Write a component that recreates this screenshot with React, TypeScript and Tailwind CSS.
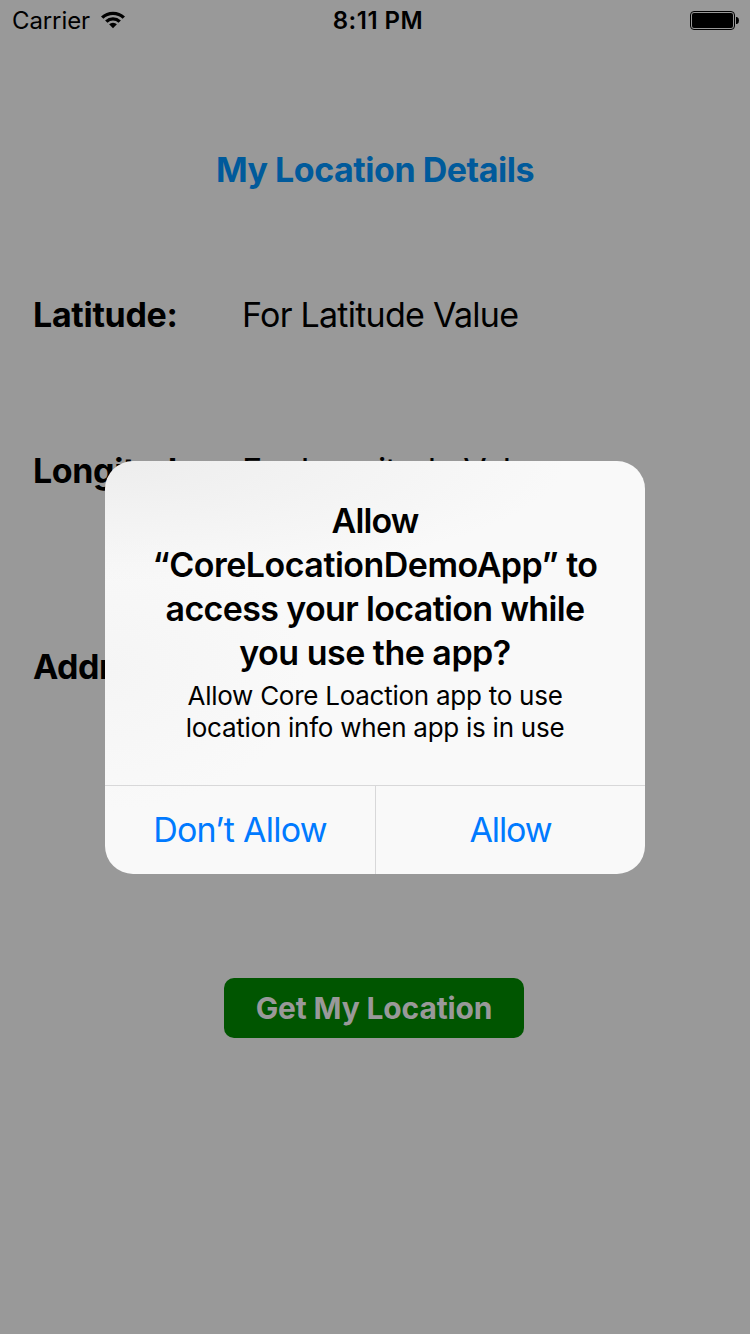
export default function App() {
  return (
    <div className="relative flex h-[1334px] w-[750px] flex-col overflow-hidden bg-[#999999] font-['Inter','Liberation_Sans',sans-serif] text-black">
      <header className="flex h-10 shrink-0 items-center justify-between pl-3 pr-[11px] pt-[2px] text-[24px]">
        <div className="flex w-[200px] items-center gap-[10px]">
          <span className="whitespace-nowrap leading-10 tracking-[-0.1px]">Carrier</span>
          <svg className="mb-[3px]" width="26" height="18" viewBox="0 0 26 18">
            <path d="M1 5.400a17.600 17.600 0 0 1 24 0l-2.400 2.300a14.200 14.200 0 0 0-19.200 0z" />
            <path d="M5.100 9.400a11.600 11.600 0 0 1 15.800 0l-2.400 2.300a8.200 8.200 0 0 0-11 0z" />
            <path d="M9.100 13.200a5.700 5.700 0 0 1 7.800 0l-3.900 4.100z" />
          </svg>
        </div>
        <span className="ml-[5px] whitespace-nowrap font-semibold leading-10 tracking-[0.5px]">8:11 PM</span>
        <div className="flex w-[200px] justify-end">
          <svg width="49" height="20" viewBox="0 0 49 20">
            <rect x=".5" y=".5" width="44" height="18" rx="3.5" fill="none" stroke="black" />
            <rect x="2" y="2" width="41" height="15" rx="2" fill="black" />
            <path d="M46 6h1q2 .6 2 3.500t-2 3.500h-1z" fill="black" />
          </svg>
        </div>
      </header>
      <main className="flex flex-col">
        <h1 className="mt-[106px] text-center text-[34px] font-bold leading-[48px] tracking-[-0.48px] text-[#005a9b]"><span>My Location Details</span></h1>
        <div className="mt-[97px] flex pl-[33px] text-[34px] leading-[48px]">
          <b className="w-[209px] tracking-[-0.3px]"><span>Latitude:</span></b><span className="tracking-[-0.74px]">For Latitude Value</span>
        </div>
        <div className="mt-[108px] flex pl-[33px] text-[34px] leading-[48px]">
          <b className="w-[209px] tracking-[-0.4px]"><span>Longitude:</span></b><span className="tracking-[-0.74px]">For Longitude Value</span>
        </div>
        <div className="mt-[148px] flex pl-[33px] text-[34px] leading-[48px] tracking-[-0.5px]">
          <b><span>Address:</span></b>
        </div>
        <button className="ml-[224px] mt-[287px] h-[60px] w-[300px] rounded-[10px] bg-[#005500] text-[30px] font-bold tracking-[-0.15px] text-[#999999]"><span>Get My Location</span></button>
      </main>
      <section role="dialog" className="absolute left-[105px] top-[461px] flex h-[413px] w-[540px] flex-col overflow-hidden rounded-[28px] bg-[#f9f9f9] bg-[radial-gradient(ellipse_460px_120px_at_0_0,#ededed,#f9f9f900),radial-gradient(ellipse_200px_140px_at_0_210px,#f5f5f5,#f9f9f900)] text-center">
        <div className="flex h-[324px] flex-col items-center pt-[38px]">
          <h2 className="whitespace-nowrap text-[34px] font-semibold leading-[44px] tracking-[-0.5px]">
            <span className="tracking-[-0.9px]">Allow</span><br /><span>“CoreLocationDemoApp” to</span><br /><span className="tracking-[-0.64px]">access your location while</span><br /><span>you use the app?</span>
          </h2>
          <p className="mt-[5px] whitespace-nowrap text-[26px] leading-8 tracking-[-0.26px]"><span>Allow Core Loaction app to use</span><br /><span>location info when app is in use</span></p>
        </div>
        <div className="flex h-[89px] border-t border-[#d8d8d9] text-[34px] text-[#007aff]">
          <button className="w-[271px] border-r border-[#d8d8d9] pb-px tracking-[-0.75px]"><span>Don’t Allow</span></button>
          <button className="w-[269px] pb-px tracking-[-1.1px]"><span>Allow</span></button>
        </div>
      </section>
    </div>
  );
}
